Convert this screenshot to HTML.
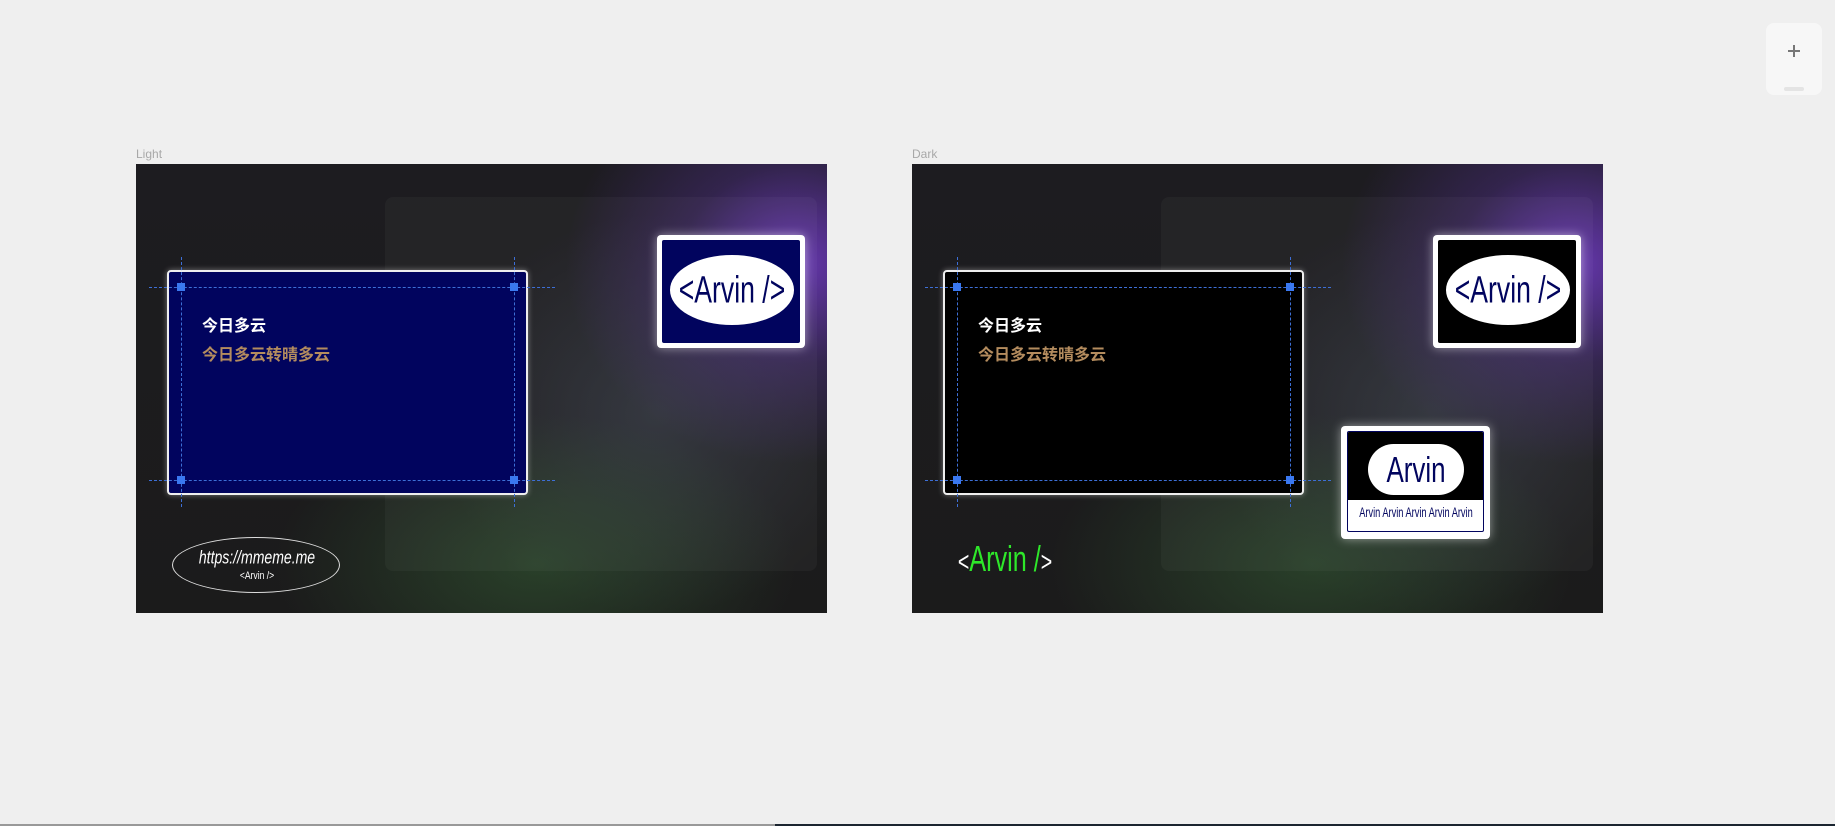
<!DOCTYPE html>
<html><head><meta charset="utf-8"><style>
*{margin:0;padding:0;box-sizing:border-box}
body{width:1835px;height:826px;background:#efefef;position:relative;overflow:hidden;font-family:"Liberation Sans","Noto Sans CJK SC",sans-serif}
.abs{position:absolute}
.lbl{font-size:12px;color:#a8a8a8}
.panel{position:absolute;top:164px;width:691px;height:449px;overflow:hidden;background:#1b1c1b}
.glow{position:absolute;inset:0;background:
radial-gradient(ellipse 230px 200px at 660px 100px,rgba(115,60,200,.85),rgba(90,50,160,.35) 50%,transparent 100%),
radial-gradient(ellipse 260px 150px at 400px 400px,rgba(55,100,55,.5),transparent 100%),
radial-gradient(ellipse 220px 200px at 520px 250px,rgba(80,90,110,.35),transparent 100%),
linear-gradient(180deg,#1d1c20 0%,#1b1b1b 100%)}
.inner{position:absolute;left:249px;top:33px;width:432px;height:374px;border-radius:8px;background:rgba(255,255,255,.035)}
.card{position:absolute;left:31px;top:106px;width:361px;height:225px;border:2px solid #eee;border-radius:4px;box-shadow:0 0 6px rgba(255,255,255,.4)}
.t1{position:absolute;left:66px;top:150px;font-size:16px;font-weight:bold;color:#fff;font-family:"Noto Sans CJK SC",sans-serif;line-height:20px}
.t2{position:absolute;left:66px;top:179px;font-size:16px;font-weight:bold;color:#b48c5e;font-family:"Noto Sans CJK SC",sans-serif;line-height:20px}
.hl{position:absolute;left:13px;width:406px;border-top:1px dashed #3d6fd6}
.vl{position:absolute;top:93px;height:250px;border-left:1px dashed #3d6fd6}
.sq{position:absolute;width:8px;height:8px;background:#3a78f0}
.c{position:absolute;white-space:nowrap;transform:translate(-50%,-50%) scaleX(var(--s,.72))}
</style></head><body>
<div class="abs lbl" style="left:136px;top:147px">Light</div>
<div class="abs lbl" style="left:912px;top:147px">Dark</div>

<!-- Light -->
<div class="panel" style="left:136px">
 <div class="glow"></div><div class="inner"></div>
 <div class="card" style="background:#01045e"></div>
 <div class="hl" style="top:123px"></div><div class="hl" style="top:316px"></div>
 <div class="vl" style="left:45px"></div><div class="vl" style="left:378px"></div>
 <div class="sq" style="left:41px;top:119px"></div><div class="sq" style="left:374px;top:119px"></div>
 <div class="sq" style="left:41px;top:312px"></div><div class="sq" style="left:374px;top:312px"></div>
 <div class="t1">今日多云</div><div class="t2">今日多云转晴多云</div>
 <div class="abs" style="left:521px;top:71px;width:148px;height:113px;background:#fff;border-radius:4px;box-shadow:0 0 10px rgba(255,255,255,.5);padding:5px">
  <div style="width:100%;height:100%;background:#01045e;border-radius:2px;position:relative">
   <div class="abs" style="left:8px;top:15px;width:124px;height:70px;border-radius:50%;background:#fff;color:#01045e;font-size:38px">
    <div class="c" style="left:62px;top:36px;--s:.7">&lt;Arvin /&gt;</div></div>
  </div>
 </div>
 <div class="abs" style="left:36px;top:373px;width:168px;height:56px;border:1.5px solid #ddd;border-radius:50%;color:#fff">
  <div class="c" style="left:84px;top:20px;font-size:18px;font-style:italic;--s:.78">https://mmeme.me</div>
  <div class="c" style="left:84px;top:38px;font-size:11px;--s:.78">&lt;Arvin /&gt;</div>
 </div>
</div>

<!-- Dark -->
<div class="panel" style="left:912px">
 <div class="glow"></div><div class="inner"></div>
 <div class="card" style="background:#000"></div>
 <div class="hl" style="top:123px"></div><div class="hl" style="top:316px"></div>
 <div class="vl" style="left:45px"></div><div class="vl" style="left:378px"></div>
 <div class="sq" style="left:41px;top:119px"></div><div class="sq" style="left:374px;top:119px"></div>
 <div class="sq" style="left:41px;top:312px"></div><div class="sq" style="left:374px;top:312px"></div>
 <div class="t1">今日多云</div><div class="t2">今日多云转晴多云</div>
 <div class="abs" style="left:521px;top:71px;width:148px;height:113px;background:#fff;border-radius:4px;box-shadow:0 0 10px rgba(255,255,255,.5);padding:5px">
  <div style="width:100%;height:100%;background:#000;border-radius:2px;position:relative">
   <div class="abs" style="left:8px;top:15px;width:124px;height:70px;border-radius:50%;background:#fff;color:#01045e;font-size:38px">
    <div class="c" style="left:62px;top:36px;--s:.7">&lt;Arvin /&gt;</div></div>
  </div>
 </div>
 <div class="abs" style="left:429px;top:262px;width:149px;height:113px;background:#fff;border-radius:4px;box-shadow:0 0 10px rgba(255,255,255,.5);padding:5px 6px 7px 6px">
  <div style="width:100%;height:100%;border:1px solid #01045e;border-radius:2px;position:relative;overflow:hidden">
   <div class="abs" style="left:0;top:0;right:0;height:68px;background:#000"></div>
   <div class="abs" style="left:20px;top:12px;width:96px;height:51px;border-radius:26px;background:#fff;color:#01045e;font-size:36px">
    <div class="c" style="left:48px;top:26px;--s:.72">Arvin</div></div>
   <div class="c" style="left:68px;top:80px;font-size:14px;color:#01045e;--s:.66">Arvin Arvin Arvin Arvin Arvin</div>
  </div>
 </div>
 <div class="c" style="left:93px;top:395px;font-size:36px;--s:.7"><span style="color:#fff;font-size:28px">&lt;</span><span style="color:#2ee82a">Arvin /</span><span style="color:#fff;font-size:28px">&gt;</span></div>
</div>

<!-- plus button -->
<div class="abs" style="left:1766px;top:23px;width:56px;height:72px;background:#f7f7f7;border-radius:8px">
 <div class="abs" style="left:22px;top:27px;width:12px;height:1.5px;background:#777"></div>
 <div class="abs" style="left:27.3px;top:21.5px;width:1.5px;height:12px;background:#777"></div>
 <div class="abs" style="left:18px;top:64px;width:20px;height:4px;border-radius:2px;background:#e4e4e4"></div>
</div>
<div class="abs" style="left:0;top:824px;width:775px;height:2px;background:#999"></div>
<div class="abs" style="left:775px;top:824px;width:1060px;height:2px;background:#1b2530"></div>
</body></html>
